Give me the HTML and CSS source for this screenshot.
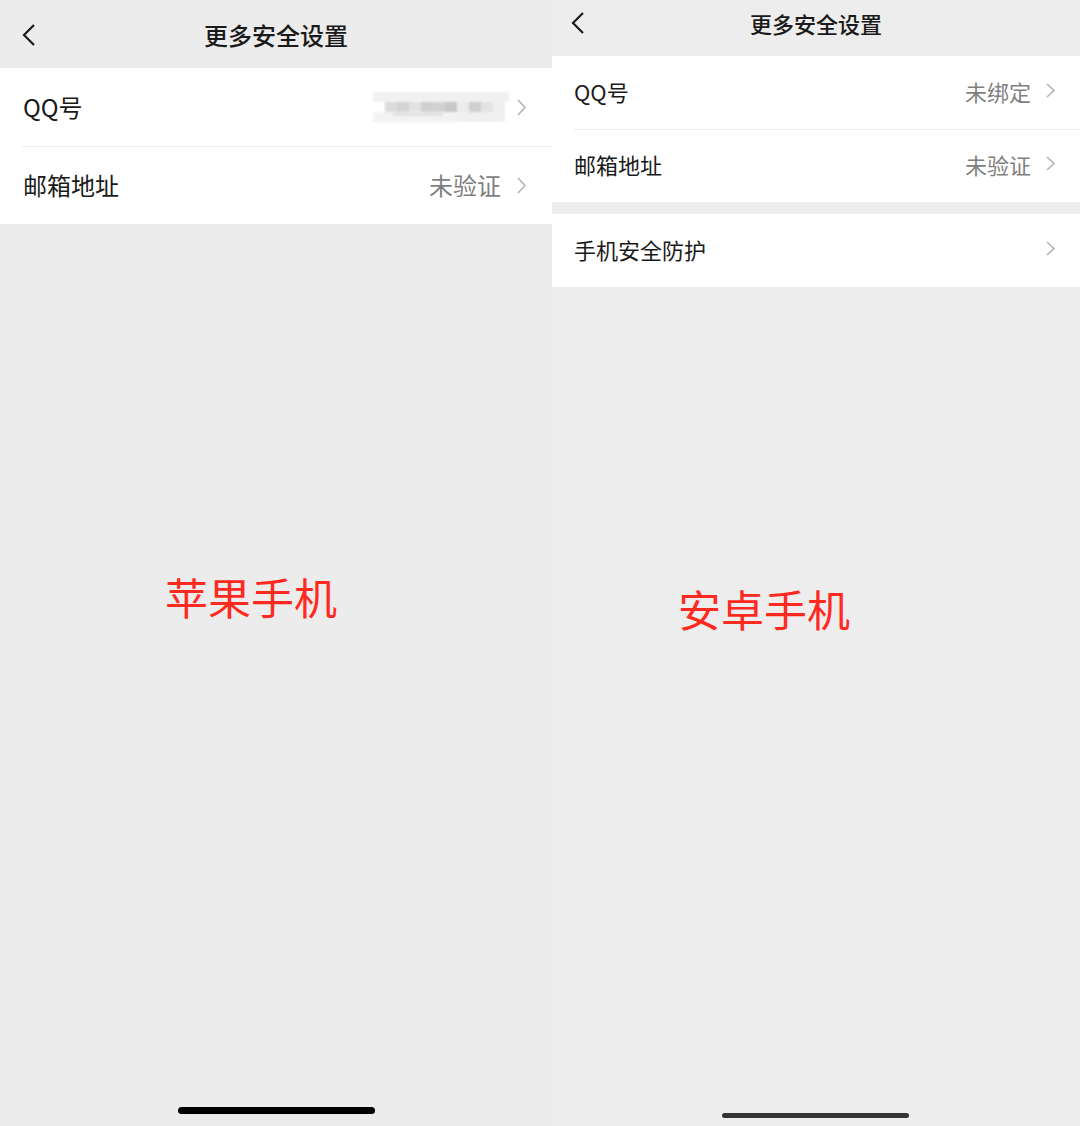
FILE: index.html
```html
<!DOCTYPE html>
<html lang="zh-CN">
<head>
    <meta charset="UTF-8">
    <meta name="viewport" content="width=device-width, initial-scale=1.0">
    <title>更多安全设置</title>
    <link rel="stylesheet" href="styles.css">
</head>
<body>
    <!-- iOS 版 -->
    <div class="phone ios">
        <div class="nav">
            <svg class="back" width="14" height="24" viewBox="0 0 14 24"><path d="M12 2 L2 12 L12 22" fill="none" stroke="#1a1a1a" stroke-width="2.2"/></svg>
            <div class="title">更多安全设置</div>
        </div>

        <div class="group">
            <div class="cell">
                <span class="label">QQ号</span>
                <span class="value">
                    <svg class="mosaic" width="136" height="32" viewBox="0 0 136 32">
                        <rect x="0" y="0" width="136" height="10" fill="#f1f1f1"/>
                        <rect x="12" y="10" width="12" height="10" fill="#dcdcdc"/>
                        <rect x="24" y="10" width="12" height="10" fill="#d4d4d4"/>
                        <rect x="36" y="10" width="12" height="10" fill="#e2e2e2"/>
                        <rect x="48" y="10" width="12" height="10" fill="#cfcfcf"/>
                        <rect x="60" y="10" width="12" height="10" fill="#d2d2d2"/>
                        <rect x="72" y="10" width="12" height="10" fill="#c8c8c8"/>
                        <rect x="84" y="10" width="12" height="10" fill="#ececec"/>
                        <rect x="96" y="10" width="12" height="10" fill="#d0d0d0"/>
                        <rect x="108" y="10" width="12" height="10" fill="#e4e4e4"/>
                        <rect x="120" y="10" width="12" height="10" fill="#efefef"/>
                        <rect x="0" y="20" width="84" height="10" fill="#f3f3f3"/>
                        <rect x="20" y="21" width="50" height="3" fill="#e0e0e0"/>
                        <rect x="84" y="20" width="48" height="10" fill="#f0f0f0"/>
                    </svg>
                    <svg class="arrow" width="11" height="19" viewBox="0 0 11 19"><path d="M2 2 L9 9.5 L2 17" fill="none" stroke="#b3b3b3" stroke-width="1.6"/></svg>
                </span>
            </div>
            <div class="cell">
                <span class="label">邮箱地址</span>
                <span class="value">未验证
                    <svg class="arrow" width="11" height="19" viewBox="0 0 11 19"><path d="M2 2 L9 9.5 L2 17" fill="none" stroke="#b3b3b3" stroke-width="1.6"/></svg>
                </span>
            </div>
        </div>

        <div class="tag">苹果手机</div>
        <div class="home-bar"></div>
    </div>

    <!-- 安卓版 -->
    <div class="phone android">
        <div class="nav">
            <svg class="back" width="14" height="24" viewBox="0 0 14 24"><path d="M12 2 L2 12 L12 22" fill="none" stroke="#1a1a1a" stroke-width="2.2"/></svg>
            <div class="title">更多安全设置</div>
        </div>

        <div class="group">
            <div class="cell">
                <span class="label">QQ号</span>
                <span class="value">未绑定
                    <svg class="arrow" width="11" height="17" viewBox="0 0 11 17"><path d="M2 2 L9 8.5 L2 15" fill="none" stroke="#b3b3b3" stroke-width="1.6"/></svg>
                </span>
            </div>
            <div class="cell">
                <span class="label">邮箱地址</span>
                <span class="value">未验证
                    <svg class="arrow" width="11" height="17" viewBox="0 0 11 17"><path d="M2 2 L9 8.5 L2 15" fill="none" stroke="#b3b3b3" stroke-width="1.6"/></svg>
                </span>
            </div>
        </div>

        <div class="group">
            <div class="cell">
                <span class="label">手机安全防护</span>
                <span class="value">
                    <svg class="arrow" width="11" height="17" viewBox="0 0 11 17"><path d="M2 2 L9 8.5 L2 15" fill="none" stroke="#b3b3b3" stroke-width="1.6"/></svg>
                </span>
            </div>
        </div>

        <div class="tag">安卓手机</div>
        <div class="home-bar"></div>
    </div>
</body>
</html>
```

FILE: styles.css
```css
body {
    margin: 0;
    padding: 0;
    height: 1126px;
    display: flex;
    background-color: #ededed;
    font-family: "Noto Sans CJK SC", "Noto Sans", sans-serif;
    color: #1a1a1a;
    overflow: hidden;
}

.phone {
    display: flex;
    flex-direction: column;
    height: 100%;
    background-color: #ececec;
}

.ios {
    width: 552px;
}

.android {
    width: 528px;
    background-color: #ededed;
}

/* 顶部导航 */
.nav {
    position: relative;
    display: flex;
    align-items: center;
    justify-content: center;
}

.back {
    position: absolute;
    top: 50%;
    transform: translateY(-50%);
}

.title {
    font-weight: 500;
    line-height: 1;
}

.ios .nav {
    height: 68px;
}

.ios .back {
    left: 22px;
    margin-top: 1px;
}

.ios .title {
    font-size: 24px;
    margin-top: 2px;
}

.android .nav {
    height: 56px;
}

.android .back {
    left: 19px;
    margin-top: -5px;
}

.android .title {
    font-size: 22px;
    margin-top: -10px;
}

/* 列表 */
.group {
    background-color: #fff;
}

.cell {
    box-sizing: border-box;
    display: flex;
    align-items: center;
    justify-content: space-between;
    position: relative;
}

.cell + .cell::before {
    content: "";
    position: absolute;
    top: 0;
    right: 0;
    height: 1px;
    background-color: #ececec;
}

.label {
    line-height: 1;
}

.value {
    display: flex;
    align-items: center;
    color: #7f7f7f;
    line-height: 1;
}

.arrow {
    flex: none;
}

.ios .cell {
    height: 78px;
    padding: 0 25px 0 23px;
    font-size: 24px;
}

.ios .cell + .cell::before {
    left: 22px;
}

.ios .value {
    gap: 15px;
}

.mosaic {
    filter: blur(1px);
    margin-top: 2px;
}

.ios .mosaic {
    margin-right: -8px;
}

.android .group + .group {
    margin-top: 12px;
}

.android .cell {
    height: 73px;
    padding: 0 24px 4px 22px;
    font-size: 22px;
}

.android .cell + .cell::before {
    left: 22px;
}

.android .value {
    gap: 14px;
}

/* 红色说明文字 */
.tag {
    color: #ff2a1f;
    font-size: 43px;
    line-height: 1;
}

.ios .tag {
    margin: 351px 0 0 165px;
}

.android .tag {
    margin: 300px 0 0 126px;
}

/* 底部手势条 */
.home-bar {
    margin-top: auto;
    border-radius: 4px;
}

.ios .home-bar {
    width: 197px;
    height: 7px;
    margin-left: 178px;
    margin-bottom: 12px;
    background-color: #000;
}

.android .home-bar {
    width: 187px;
    height: 5px;
    margin-left: 170px;
    margin-bottom: 8px;
    background-color: #333;
}
```
